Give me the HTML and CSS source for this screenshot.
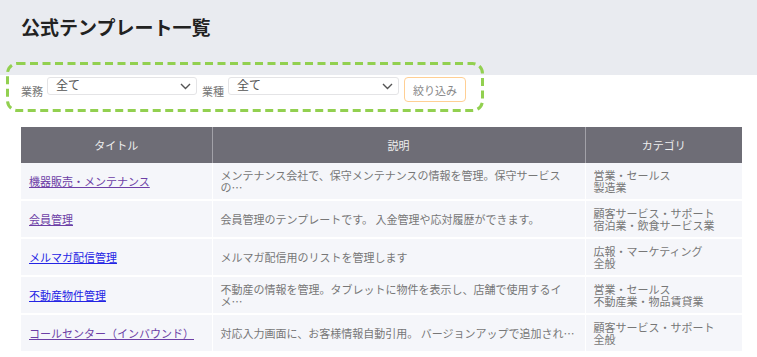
FILE: index.html
```html
<!DOCTYPE html>
<html lang="ja">
<head>
    <meta charset="UTF-8">
    <meta name="viewport" content="width=device-width, initial-scale=1.0">
    <title>公式テンプレート一覧</title>
    <link rel="stylesheet" href="styles.css">
</head>
<body>
    <div class="page-header">
        <h1>公式テンプレート一覧</h1>
    </div>

    <div class="filter">
        <span class="filter-label">業務</span>
        <div class="select select-job">
            <span>全て</span>
            <svg width="11" height="7" viewBox="0 0 11 7"><path d="M1 1l4.5 4.5L10 1" fill="none" stroke="#555" stroke-width="1.4"/></svg>
        </div>
        <span class="filter-label">業種</span>
        <div class="select select-industry">
            <span>全て</span>
            <svg width="11" height="7" viewBox="0 0 11 7"><path d="M1 1l4.5 4.5L10 1" fill="none" stroke="#555" stroke-width="1.4"/></svg>
        </div>
        <button class="filter-btn">絞り込み</button>
    </div>

    <!-- annotation frame around the filter -->
    <svg class="highlight" width="478" height="50" viewBox="0 0 478 50">
        <rect x="1.5" y="1.5" width="475" height="47" rx="10" ry="10" fill="none" stroke="#92d050" stroke-width="3" stroke-dasharray="8 4.5"/>
    </svg>

    <table class="templates">
        <colgroup>
            <col class="col-title">
            <col class="col-desc">
            <col class="col-cat">
        </colgroup>
        <thead>
            <tr>
                <th>タイトル</th>
                <th>説明</th>
                <th>カテゴリ</th>
            </tr>
        </thead>
        <tbody>
            <tr>
                <td><a href="#" class="visited">機器販売・メンテナンス</a></td>
                <td class="desc">メンテナンス会社で、保守メンテナンスの情報を管理。保守サービスの…</td>
                <td class="cat">営業・セールス<br>製造業</td>
            </tr>
            <tr>
                <td><a href="#" class="visited">会員管理</a></td>
                <td class="desc">会員管理のテンプレートです。 入金管理や応対履歴ができます。</td>
                <td class="cat">顧客サービス・サポート<br>宿泊業・飲食サービス業</td>
            </tr>
            <tr>
                <td><a href="#">メルマガ配信管理</a></td>
                <td class="desc">メルマガ配信用のリストを管理します</td>
                <td class="cat">広報・マーケティング<br>全般</td>
            </tr>
            <tr>
                <td><a href="#">不動産物件管理</a></td>
                <td class="desc">不動産の情報を管理。タブレットに物件を表示し、店舗で使用するイメ…</td>
                <td class="cat">営業・セールス<br>不動産業・物品賃貸業</td>
            </tr>
            <tr>
                <td><a href="#" class="visited">コールセンター（インバウンド）</a></td>
                <td class="desc">対応入力画面に、お客様情報自動引用。 バージョンアップで追加され…</td>
                <td class="cat">顧客サービス・サポート<br>全般</td>
            </tr>
        </tbody>
    </table>
</body>
</html>
```

FILE: styles.css
```css
body {
    margin: 0;
    position: relative;
    font-family: "Noto Sans CJK JP", "Noto Sans", sans-serif;
    background-color: #fff;
    color: #555;
}
.page-header {
    background-color: #e9ebf0;
    height: 75px;
    padding: 13px 21px 0;
    box-sizing: border-box;
}
h1 {
    margin: 0;
    font-size: 19px;
    font-weight: bold;
    color: #222;
}
.filter {
    display: flex;
    align-items: flex-start;
    padding: 2px 21px 0;
}
.filter-label {
    font-size: 11px;
    color: #777;
    margin-top: 6px;
    margin-right: 4px;
}
.select {
    display: flex;
    align-items: center;
    justify-content: space-between;
    height: 18px;
    box-sizing: border-box;
    padding: 0 5px 0 8px;
    border: 1px solid #e4e4e6;
    border-radius: 3px;
    font-size: 12px;
    color: #555;
    margin-right: 5px;
}
.select span {
    margin-top: -3px;
}
.select-job {
    width: 150px;
}
.select-industry {
    width: 171px;
}
.filter-btn {
    width: 62px;
    height: 25px;
    background-color: #fff;
    border: 1px solid #ffcf94;
    border-radius: 4px;
    font-family: inherit;
    font-size: 11px;
    color: #888;
    padding: 0;
}
.highlight {
    position: absolute;
    left: 6px;
    top: 62px;
}
.templates {
    margin: 25px 0 0 21px;
    width: 721px;
    border-collapse: collapse;
    table-layout: fixed;
}
.col-title {
    width: 191px;
}
.col-desc {
    width: 373px;
}
.col-cat {
    width: 157px;
}
.templates th {
    height: 34px;
    background-color: #6e6d76;
    color: #eee;
    font-size: 11px;
    font-weight: normal;
    border-left: 1px solid #a2a1a8;
}
.templates th:first-child {
    border-left: none;
}
.templates td {
    height: 36px;
    background-color: #f5f6fa;
    border-bottom: 2px solid #fff;
    border-left: 1px solid #fff;
    padding: 0 7px 0 8px;
    font-size: 11px;
    line-height: 12.5px;
    color: #777;
}
.templates td:first-child {
    border-left: none;
}
.templates a {
    color: #2424e4;
}
.templates a.visited {
    color: #6d3fa6;
}
```
